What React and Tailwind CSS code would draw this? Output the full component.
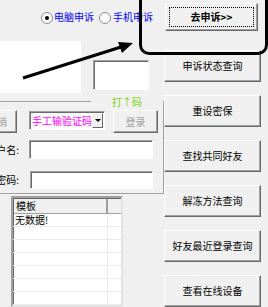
import React from 'react';

const WinButton = ({ children, className = '', disabled = false }) => (
    <div
        className={`flex items-center justify-center bg-[#f0f0f0] border border-t-white border-l-white border-r-[#696969] border-b-[#696969] shadow-[inset_-1px_-1px_0_#a0a0a0] whitespace-nowrap ${disabled ? 'text-[#a0a0a0]' : 'text-black'} ${className}`}
    >
        {children}
    </div>
);

const TextBox = ({ className = '', children }) => (
    <div className={`bg-white border border-t-[#a0a0a0] border-l-[#a0a0a0] border-r-white border-b-white shadow-[inset_1px_1px_0_#696969] ${className}`}>
        {children}
    </div>
);

const Radio = ({ checked }) => (
    <div className="w-[12px] h-[12px] rounded-full bg-white border border-[#8a8a8a] flex items-center justify-center shrink-0">
        {checked && <div className="w-[4px] h-[4px] rounded-full bg-black" />}
    </div>
);

const rightButtons = ['申诉状态查询', '重设密保', '查找共同好友', '解冻方法查询', '好友最近登录查询', '查看在线设备'];

const App = () => {
    return (
        <div className="relative w-[268px] h-[307px] overflow-hidden bg-[#f0f0f0] flex font-['Noto_Sans_CJK_SC',sans-serif] text-[10px] leading-none">
            {/* left side */}
            <div className="w-[164px] shrink-0 flex flex-col">
                <div className="h-[42px] flex items-start pt-[12px] pl-[41px] text-[#0000ff]">
                    <Radio checked />
                    <span className="ml-[1px] whitespace-nowrap">电脑申诉</span>
                    <div className="ml-[5px]"><Radio /></div>
                    <span className="ml-[2px] whitespace-nowrap">手机申诉</span>
                </div>

                <div className="h-[52px] flex items-start">
                    <div className="w-[81px] h-[52px] bg-white" />
                    <TextBox className="ml-[12px] mt-[19px] w-[56px] h-[30px]" />
                </div>

                <fieldset className="-ml-[2px] mt-[3px] w-[163px] h-[101px] border border-[#a0a0a0] px-0 pb-0">
                    <legend className="ml-[92px] px-[21px] text-[#7ed321] leading-[11px] whitespace-nowrap">打↑码</legend>
                    <div className="flex items-start pt-[3px]">
                        <WinButton disabled className="-ml-[22px] w-[40px] h-[23px]">撤销</WinButton>
                        <div className="ml-[12px] mt-[1px] w-[76px] h-[19px] bg-white border border-t-[#a0a0a0] border-l-[#a0a0a0] border-r-white border-b-white shadow-[inset_1px_1px_0_#696969] flex items-center">
                            <span className="pl-[2px] text-[#ff00ff] flex-1 whitespace-nowrap">手工输验证码</span>
                            <div className="w-[13px] h-[15px] mr-[1px] bg-[#f0f0f0] border border-t-white border-l-white border-r-[#696969] border-b-[#696969] flex items-center justify-center">
                                <div className="w-0 h-0 border-l-[3px] border-r-[3px] border-t-[3px] border-l-transparent border-r-transparent border-t-black" />
                            </div>
                        </div>
                        <WinButton disabled className="ml-[8px] w-[45px] h-[23px]">登录</WinButton>
                    </div>
                    <div className="flex items-center mt-[7px]">
                        <div className="w-[20px] flex justify-end whitespace-nowrap">
                            <span>帐户名</span>
                            <span className="w-[6px] text-center">:</span>
                        </div>
                        <TextBox className="ml-[10px] w-[124px] h-[19px]" />
                    </div>
                    <div className="flex items-center mt-[12px]">
                        <div className="w-[20px] flex justify-end whitespace-nowrap">
                            <span>密码</span>
                            <span className="w-[5px] text-center">:</span>
                        </div>
                        <TextBox className="ml-[11px] w-[123px] h-[18px]" />
                    </div>
                </fieldset>

                <div className="ml-[11px] mt-[2px] w-[112px] flex-1 bg-white border-2 border-t-[#a0a0a0] border-l-[#a0a0a0] border-r-[#e3e3e3] border-b-[#e3e3e3] shadow-[inset_1px_1px_0_#696969] flex flex-col">
                    <div className="flex h-[16px] shrink-0 pl-[1px] pt-[1px]">
                        <div className="w-[94px] h-full bg-[#f0f0f0] border-r-2 border-r-[#a0a0a0] border-b border-b-[#a0a0a0] pl-[2px] flex items-center">模板</div>
                        <div className="flex-1 h-full bg-[#f0f0f0] border-b border-b-[#a0a0a0]" />
                    </div>
                    {Array.from({ length: 7 }).map((_, i) => (
                        <div key={i} className="flex h-[13px] shrink-0 border-b border-b-[#ececec] pl-[1px]">
                            <div className="w-[94px] border-r border-r-[#ececec] pl-[1px] flex items-center">
                                {i === 0 ? '无数据!' : ''}
                            </div>
                            <div className="flex-1" />
                        </div>
                    ))}
                </div>
            </div>

            {/* right side buttons */}
            <div className="w-[97px] shrink-0 flex flex-col pt-[3px]">
                <div className="ml-[1px] w-[93px] h-[38px] bg-[#f0f0f0] border border-t-white border-l-white border-r-[#696969] border-b-[#696969] shadow-[inset_-1px_-1px_0_#a0a0a0] p-[3px]">
                    <div className="w-full h-full border border-dotted border-black flex items-center justify-center font-bold">去申诉&gt;&gt;</div>
                </div>
                <div className="flex flex-col gap-[13px] mt-[19px]">
                    {rightButtons.map((label) => (
                        <WinButton key={label} className="w-[97px] h-[32px] shrink-0">{label}</WinButton>
                    ))}
                </div>
            </div>

            {/* annotation overlay */}
            <div className="absolute left-[139px] top-[-12px] w-[129px] h-[67px] border-[3px] border-black rounded-[10px] pointer-events-none" />
            <svg className="absolute left-0 top-0 pointer-events-none" width="268" height="307" viewBox="0 0 268 307">
                <line x1="23" y1="78" x2="121" y2="47" stroke="black" strokeWidth="3" />
                <polygon points="133,43 118,42 122,53" fill="black" />
            </svg>
        </div>
    );
};

export default App;
